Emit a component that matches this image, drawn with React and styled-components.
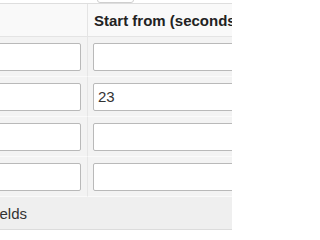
import styled, { createGlobalStyle } from 'styled-components';

const GlobalStyle = createGlobalStyle`
  html, body {
    margin: 0;
    padding: 0;
    background: #ffffff;
    overflow: hidden;
  }
  body {
    font-family: "Liberation Sans", Arial, sans-serif;
    color: #222222;
  }
`

const Page = styled.div`
  width: 232px;
  height: 232px;
  overflow: hidden;
`

const Panel = styled.div`
  margin-left: -40px;
  width: 420px;
`

const Toolbar = styled.div`
  height: 3px;
  display: flex;
  align-items: flex-end;
  padding-left: 137px;
  overflow: hidden;
`

const SmallButton = styled.div`
  width: 35px;
  height: 20px;
  border: 1px solid #cfcfcf;
  border-radius: 3px;
  background: #ffffff;
  flex: none;
`

const Grid = styled.div`
  display: grid;
  grid-template-columns: 127px 1fr;
  border-top: 1px solid #dedede;
`

const HeadCell = styled.div`
  height: 32px;
  background: #f9f9f9;
  border-bottom: 1px solid #e4e4e4;
  border-left: ${props => (props.first ? 'none' : '1px solid #e4e4e4')};
  display: flex;
  align-items: center;
  padding-left: 6px;
  font-size: 15px;
  font-weight: bold;
  color: #222222;
  white-space: nowrap;
`

const Cell = styled.div`
  height: 39px;
  background: #f3f3f3;
  border-bottom: 1px solid #fafafa;
  border-left: ${props => (props.first ? 'none' : '1px solid #e6e6e6')};
  display: flex;
  align-items: center;
  padding: 0 6px 0 5px;
`

const Input = styled.input`
  box-sizing: border-box;
  width: 100%;
  height: 28px;
  border: 1px solid #b9b9b9;
  border-radius: 2px;
  background: #ffffff;
  padding: 0 4px;
  font-family: "Liberation Sans", Arial, sans-serif;
  font-size: 15px;
  color: #333333;
  outline: none;
`

const Footer = styled.div`
  height: 32px;
  background: #efefef;
  border-bottom: 1px solid #dcdcdc;
  display: flex;
  align-items: center;
  padding-left: 32px;
  font-size: 15px;
  color: #333333;
  white-space: nowrap;
`

const rows = ['', '23', '', '']

const App = () => {
  return (
    <Page>
      <GlobalStyle />
      <Panel>
        <Toolbar>
          <SmallButton />
        </Toolbar>
        <Grid>
          <HeadCell first />
          <HeadCell>Start from (seconds)</HeadCell>
          {rows.map((start, index) => (
            <>
              <Cell first key={`name-${index}`}>
                <Input defaultValue="" />
              </Cell>
              <Cell key={`start-${index}`}>
                <Input defaultValue={start} />
              </Cell>
            </>
          ))}
        </Grid>
        <Footer>fields</Footer>
      </Panel>
    </Page>
  )
}

export default App;
